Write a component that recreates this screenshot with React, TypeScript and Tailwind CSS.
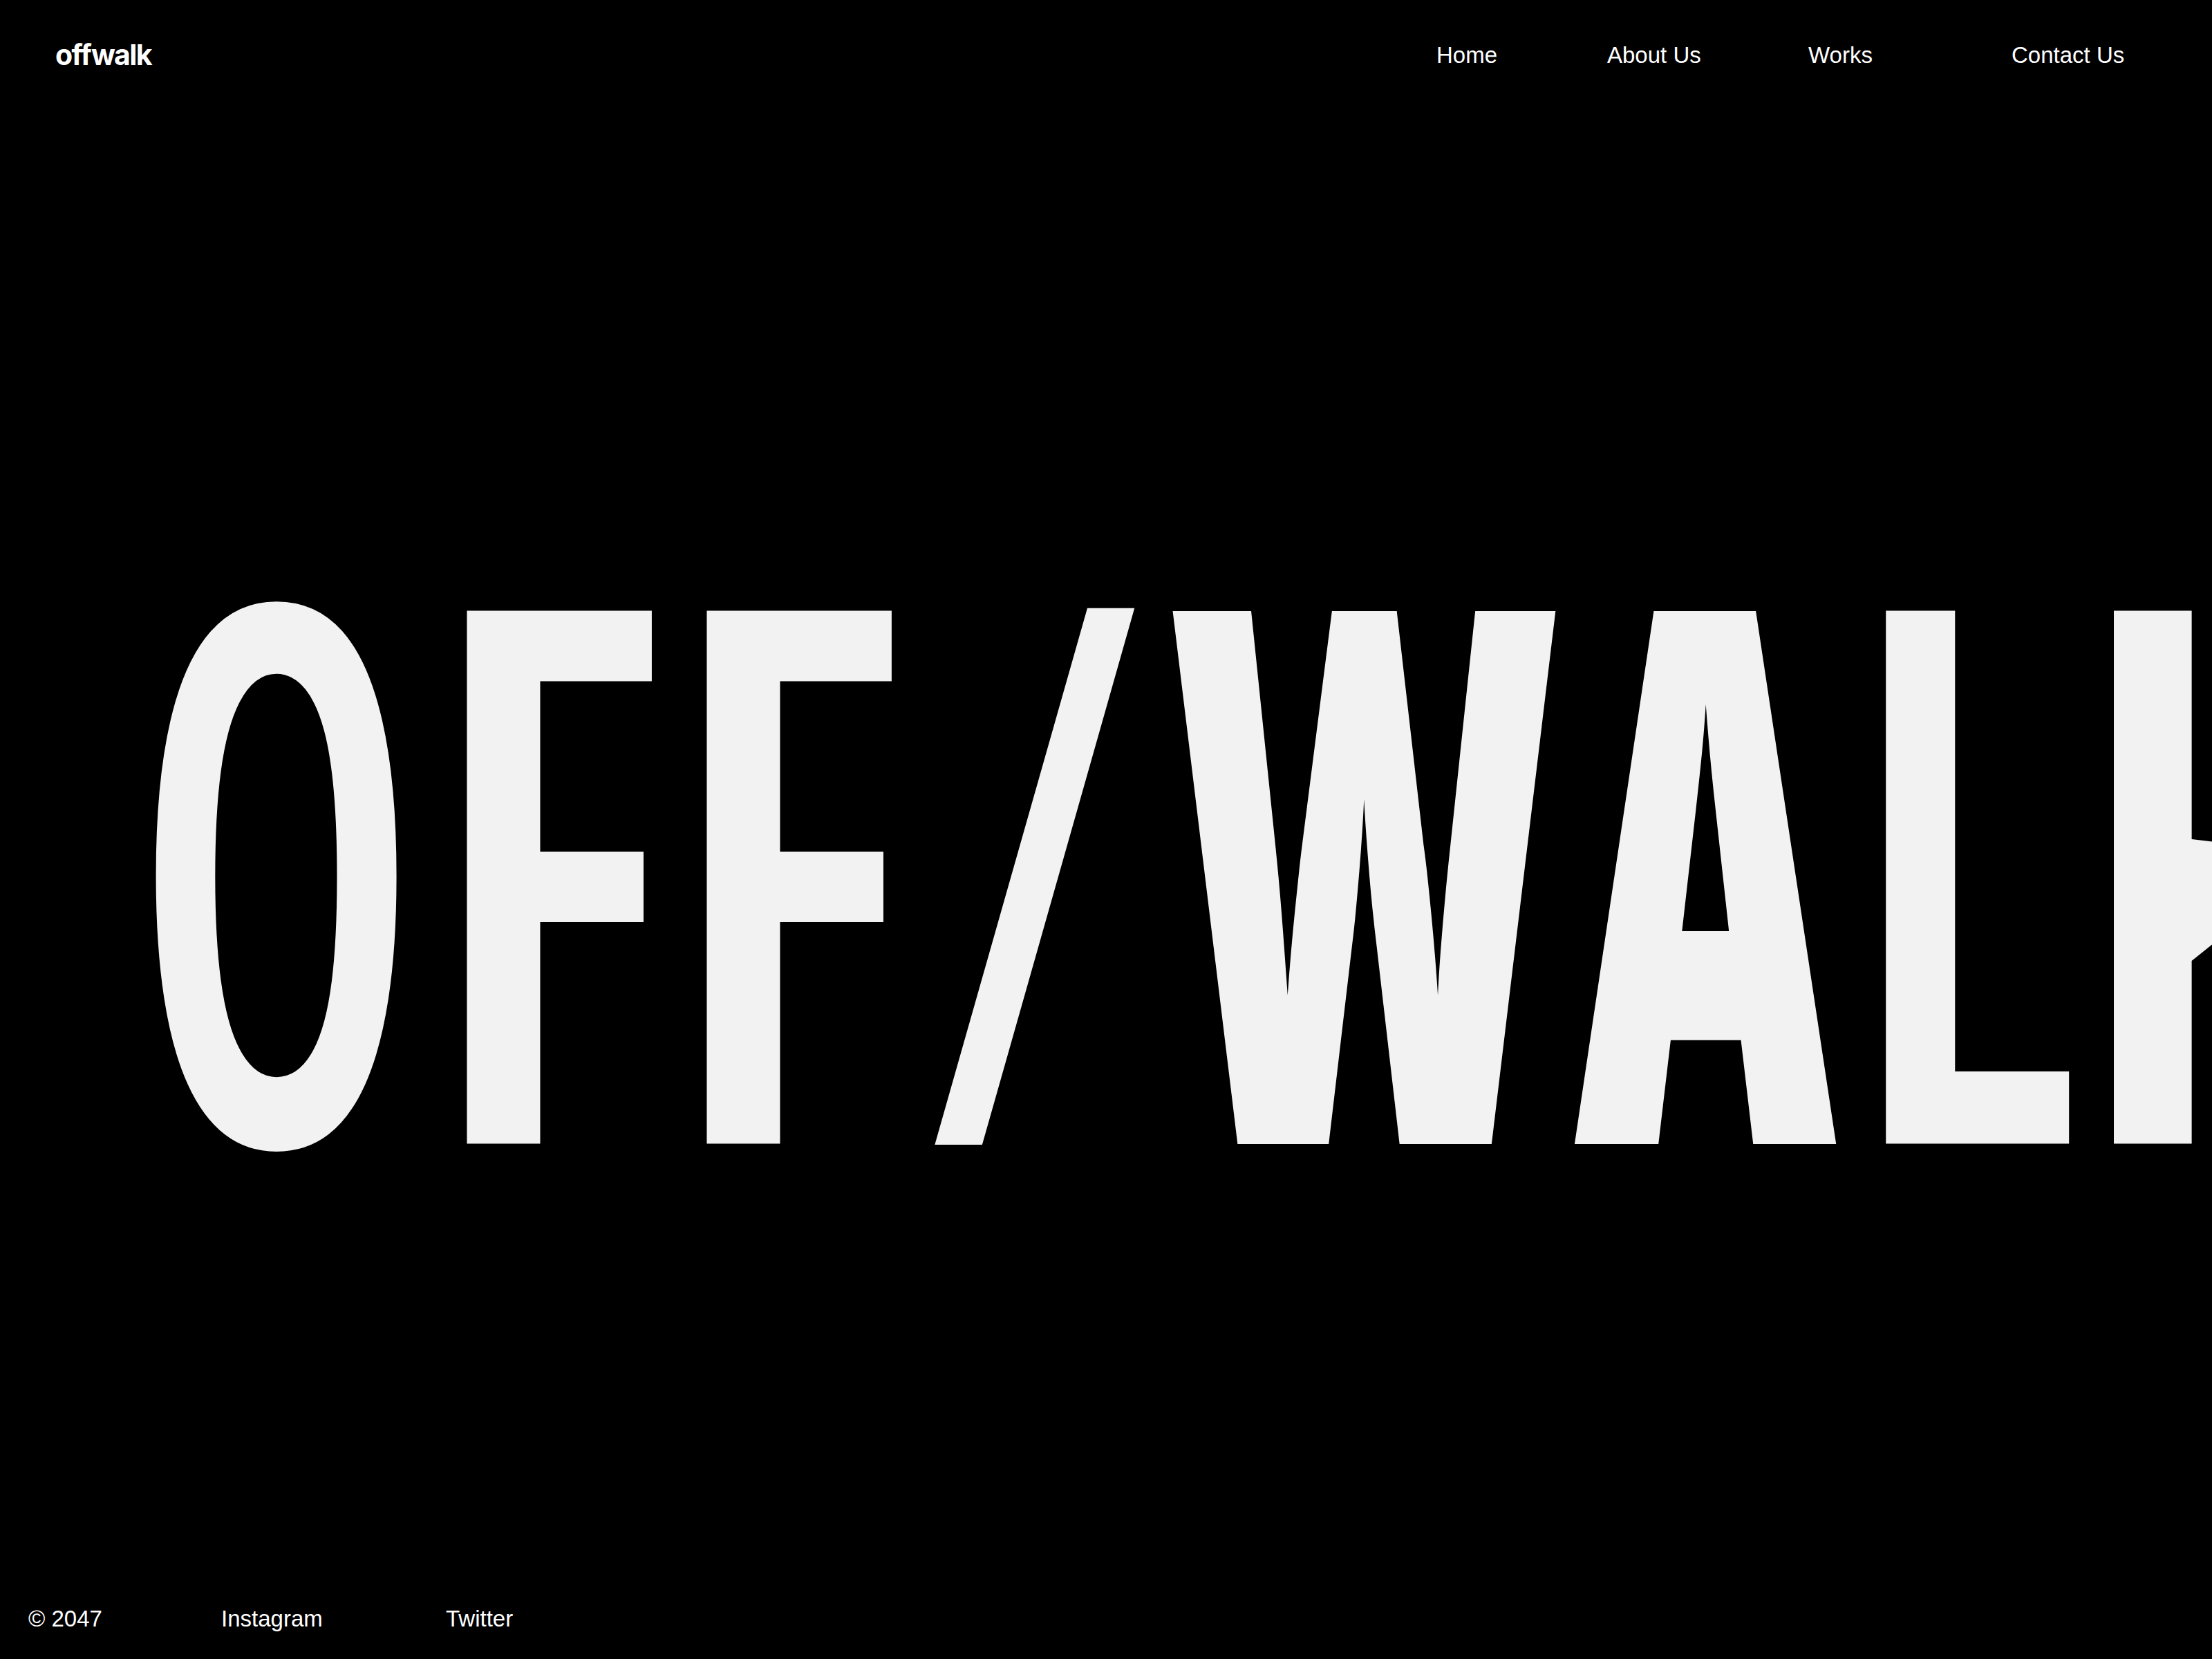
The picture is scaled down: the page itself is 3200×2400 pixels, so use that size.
import React from "react";

// big hero letters, each boxed to the width of the original glyph.
// "cut" letters get a black text-stroke that eats into the heavy glyph so the
// horizontal bars come out thinner; W and A keep their sharp joins instead.
const cut = "text-[1174px] [-webkit-text-stroke:67px_#000]";
const plain = "text-[1080px]";

const letters: { ch: string; box: string; glyph: string }[] = [
  { ch: "O", box: "ml-[229px] w-[341px]", glyph: `${cut} scale-x-[0.61]` },
  { ch: "F", box: "ml-[95px] w-[265px]", glyph: `${cut} scale-x-[0.8]` },
  { ch: "F", box: "ml-[82px] w-[265px]", glyph: `${cut} scale-x-[0.8]` },
  { ch: "/", box: "ml-[74px] w-[290px]", glyph: `${cut} scale-x-[0.73] scale-y-[0.977]` },
  { ch: "W", box: "ml-[55px] mt-[50px] w-[555px]", glyph: `${plain} scale-x-[0.633]` },
  { ch: "A", box: "ml-[25px] mt-[50px] w-[382px]", glyph: `${plain} scale-x-[0.61]` },
  { ch: "L", box: "ml-[50px] w-[265px]", glyph: `${cut} scale-x-[0.755]` },
  { ch: "K", box: "ml-[83px] w-[380px]", glyph: `${cut} scale-x-[0.85]` },
];

const nav = [
  { label: "Home", cls: "w-[247px]" },
  { label: "About Us", cls: "w-[291px]" },
  { label: "Works", cls: "w-[294px]" },
  { label: "Contact Us", cls: "" },
];

export default function App() {
  return (
    <div className="flex min-h-screen w-full flex-col overflow-hidden bg-black text-white">
      <header className="flex h-[156px] shrink-0 items-center pt-[4px]">
        <div className="w-[2078px] pl-[80px] font-['Inter',sans-serif] text-[41px] font-bold tracking-[-0.04em]">
          offwalk
        </div>
        <nav className="flex items-center font-['Liberation_Sans',Arial,sans-serif] text-[33px]">
          {nav.map((n) => (
            <a key={n.label} className={`${n.cls} whitespace-nowrap`}>
              {n.label}
            </a>
          ))}
        </nav>
      </header>

      <main className="mt-[490px] flex h-[1174px] shrink-0 flex-nowrap items-start">
        {letters.map((l, i) => (
          <div key={i} className={`${l.box} flex shrink-0 justify-center`}>
            <span
              className={`${l.glyph} inline-block font-['Open_Sans',sans-serif] leading-none font-extrabold font-stretch-condensed text-[#f2f2f2]`}
            >
              {l.ch}
            </span>
          </div>
        ))}
      </main>

      <footer className="mt-auto flex h-[116px] shrink-0 items-center pl-[41px] font-['Liberation_Sans',Arial,sans-serif] text-[33px]">
        <span className="w-[279px]">© 2047</span>
        <a className="w-[325px]">Instagram</a>
        <a>Twitter</a>
      </footer>
    </div>
  );
}
